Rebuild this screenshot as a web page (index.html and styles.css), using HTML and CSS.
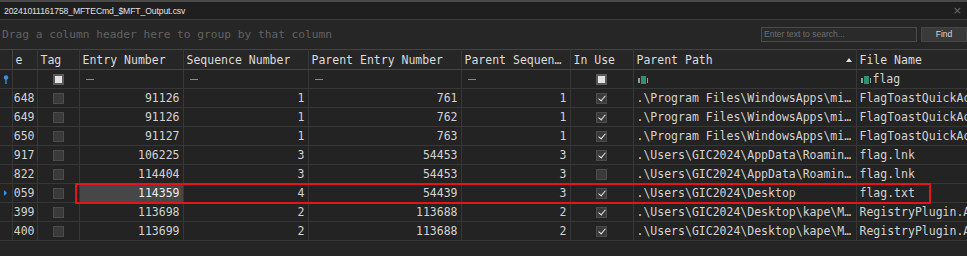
FILE: index.html
```html
<!DOCTYPE html>
<html lang="en">
<head>
  <meta charset="UTF-8" />
  <title>20241011161758_MFTECmd_$MFT_Output.csv</title>
  <link rel="stylesheet" href="styles.css">
</head>
<body>
  <div class="window">
    <div class="titlebar">
      <span class="title">20241011161758_MFTECmd_$MFT_Output.csv</span>
      <span class="close">×</span>
    </div>

    <div class="grouppanel">
      <span class="hint">Drag a column header here to group by that column</span>
      <div class="search">
        <div class="search-box">Enter text to search...</div>
        <div class="find">Find</div>
      </div>
    </div>

    <div class="gridwrap">
      <table class="grid">
        <colgroup>
          <col style="width:12px"><col style="width:25px"><col style="width:42px">
          <col style="width:104px"><col style="width:125px"><col style="width:153px">
          <col style="width:109px"><col style="width:63px"><col style="width:223px">
          <col style="width:200px">
        </colgroup>
        <thead>
          <tr>
            <th class="sel"></th>
            <th>e</th>
            <th>Tag</th>
            <th>Entry Number</th>
            <th>Sequence Number</th>
            <th>Parent Entry Number</th>
            <th>Parent Sequen…</th>
            <th>In Use</th>
            <th class="sorted">Parent Path<span class="arrow"></span></th>
            <th>File Name</th>
          </tr>
        </thead>
        <tbody>
          <tr class="filter">
            <td class="sel"><svg class="pin" width="6" height="9" viewBox="0 0 6 9"><circle cx="3" cy="2.5" r="2.2" fill="#3d8fe0"/><rect x="2.3" y="4" width="1.4" height="5" fill="#3d8fe0"/></svg></td>
            <td></td>
            <td class="center"><span class="cb cb-filter"></span></td>
            <td><span class="dash"></span></td>
            <td><span class="dash"></span></td>
            <td><span class="dash"></span></td>
            <td><span class="dash"></span></td>
            <td class="center"><span class="cb cb-filter"></span></td>
            <td><span class="abc"></span></td>
            <td><span class="abc"></span>flag</td>
          </tr>
        </tbody>
        <tbody id="rows"></tbody>
      </table>
      <div class="highlight"></div>
    </div>
  </div>

  <script>
    const rows = [
      ['12648', 91126, 1, 761, 1, true, '.\\Program Files\\WindowsApps\\mi…', 'FlagToastQuickActions.png'],
      ['12649', 91126, 1, 762, 1, true, '.\\Program Files\\WindowsApps\\mi…', 'FlagToastQuickActions.png'],
      ['12650', 91127, 1, 763, 1, true, '.\\Program Files\\WindowsApps\\mi…', 'FlagToastQuickActions.png'],
      ['63917', 106225, 3, 54453, 3, true, '.\\Users\\GIC2024\\AppData\\Roamin…', 'flag.lnk'],
      ['14822', 114404, 3, 54453, 3, false, '.\\Users\\GIC2024\\AppData\\Roamin…', 'flag.lnk'],
      ['12059', 114359, 4, 54439, 3, true, '.\\Users\\GIC2024\\Desktop', 'flag.txt'],
      ['11399', 113698, 2, 113688, 2, true, '.\\Users\\GIC2024\\Desktop\\kape\\M…', 'RegistryPlugin.Adobe.dll'],
      ['11400', 113699, 2, 113688, 2, true, '.\\Users\\GIC2024\\Desktop\\kape\\M…', 'RegistryPlugin.Adobe.dll']
    ];
    const selected = 5;
    const tbody = document.getElementById('rows');

    rows.forEach((r, i) => {
      const tr = document.createElement('tr');
      if (i === selected) tr.className = 'current';
      tr.innerHTML = `
        <td class="sel">${i === selected ? '<span class="marker"></span>' : ''}</td>
        <td class="num clip">${r[0]}</td>
        <td class="center"><span class="cb"></span></td>
        <td class="num focus">${r[1]}</td>
        <td class="num">${r[2]}</td>
        <td class="num">${r[3]}</td>
        <td class="num">${r[4]}</td>
        <td class="center"><span class="cb ${r[5] ? 'checked' : ''}"></span></td>
        <td>${r[6]}</td>
        <td>${r[7]}</td>
      `;
      tbody.appendChild(tr);
    });
  </script>
</body>
</html>
```

FILE: styles.css
```css
* {
  box-sizing: border-box;
}

html, body {
  margin: 0;
  padding: 0;
  width: 967px;
  height: 256px;
  overflow: hidden;
  background: #252525;
}

.window {
  height: 256px;
  background: #252525;
  color: #d4d4d4;
}

/* barra de título */
.titlebar {
  height: 20px;
  display: flex;
  align-items: center;
  justify-content: space-between;
  padding: 0 4px;
  background: #1f1f1f;
  border-top: 2px solid #4a4a4a;
  border-bottom: 1px solid #3c3c3c;
}

.title {
  font-family: "Liberation Sans", Arial, sans-serif;
  font-size: 8.6px;
  color: #e0e0e0;
  letter-spacing: -0.1px;
}

.close {
  font-family: "DejaVu Sans", sans-serif;
  font-size: 11px;
  color: #6a6a6a;
  margin-right: 1px;
}

/* painel de agrupamento */
.grouppanel {
  height: 29px;
  display: flex;
  align-items: center;
  justify-content: space-between;
  padding-left: 2px;
  background: #262626;
}

.hint {
  font-family: "DejaVu Sans Mono", monospace;
  font-size: 11.2px;
  color: #626262;
}

.search {
  display: flex;
  gap: 4px;
}

.search-box {
  width: 156px;
  height: 15px;
  padding-left: 2px;
  border: 1px solid #4a4a4a;
  background: #2a2a2a;
  font-family: "Liberation Sans", Arial, sans-serif;
  font-size: 8.5px;
  line-height: 13px;
  color: #6e6e6e;
}

.find {
  width: 46px;
  height: 15px;
  background: #3a3a3a;
  border: 1px solid #454545;
  font-family: "Liberation Sans", Arial, sans-serif;
  font-size: 8.5px;
  line-height: 13px;
  color: #d8d8d8;
  text-align: center;
}

/* grelha */
.gridwrap {
  position: relative;
  width: 967px;
  overflow: hidden;
}

.grid {
  table-layout: fixed;
  width: 1056px;
  border-collapse: collapse;
  font-family: "DejaVu Sans Mono", monospace;
  font-size: 11.5px;
  color: #d2d2d2;
  background: #232323;
}

.grid th,
.grid td {
  border: 1px solid #373737;
  padding: 0 3px;
  white-space: nowrap;
  overflow: hidden;
  text-align: left;
}

.grid th {
  height: 20px;
  font-weight: normal;
  color: #dcdcdc;
  background: #262626;
  border-top-color: #444;
  border-bottom-color: #444;
}

.grid td {
  height: 19px;
}

.grid .sel {
  padding: 0;
  border-left: none;
}

.grid th.sel {
  border-right-color: #444;
}

.grid th.sorted {
  position: relative;
}

.arrow {
  position: absolute;
  right: 4px;
  top: 8px;
  border-left: 3px solid transparent;
  border-right: 3px solid transparent;
  border-bottom: 4px solid #e0e0e0;
}

.num {
  text-align: right !important;
}

.clip {
  direction: rtl;
  text-align: right;
  padding-right: 2px !important;
}

.center {
  text-align: center !important;
  padding: 0 !important;
}

/* caixas de seleção */
.cb {
  display: inline-block;
  width: 11px;
  height: 11px;
  vertical-align: middle;
  background: #3a3a3a;
  border: 1px solid #4c4c4c;
  position: relative;
}

.cb.checked::after {
  content: "";
  position: absolute;
  left: 3px;
  top: 0px;
  width: 3px;
  height: 6px;
  border-right: 1.5px solid #e8e8e8;
  border-bottom: 1.5px solid #e8e8e8;
  transform: rotate(40deg);
}

.cb-filter {
  background: #e2e2e2;
  border: 2px solid #5a5a5a;
}

.dash {
  display: inline-block;
  width: 8px;
  height: 1px;
  background: #8a8a8a;
  vertical-align: middle;
  margin-left: 3px;
}

.abc {
  display: inline-block;
  width: 10px;
  height: 8px;
  vertical-align: middle;
  margin: 0 2px 0 1px;
  background:
    linear-gradient(#2f9070, #2f9070) 3px 0 / 5px 8px no-repeat,
    linear-gradient(#1d3b32, #1d3b32) 4px 2px / 3px 4px no-repeat,
    linear-gradient(#7fa898, #7fa898) 0 2px / 2px 5px no-repeat,
    linear-gradient(#7fa898, #7fa898) 9px 2px / 1px 5px no-repeat;
}

.pin {
  display: block;
  margin: 0 auto;
}

.marker {
  display: block;
  margin-left: 4px;
  width: 0;
  height: 0;
  border-top: 3px solid transparent;
  border-bottom: 3px solid transparent;
  border-left: 3px solid #3d8fe0;
}

/* linha selecionada */
.current td.focus {
  background: #474747;
  color: #ececec;
}

/* moldura vermelha sobre a linha selecionada */
.highlight {
  position: absolute;
  left: 75px;
  top: 134px;
  width: 856px;
  height: 21px;
  border: 2px solid #e5141b;
  pointer-events: none;
}
```
